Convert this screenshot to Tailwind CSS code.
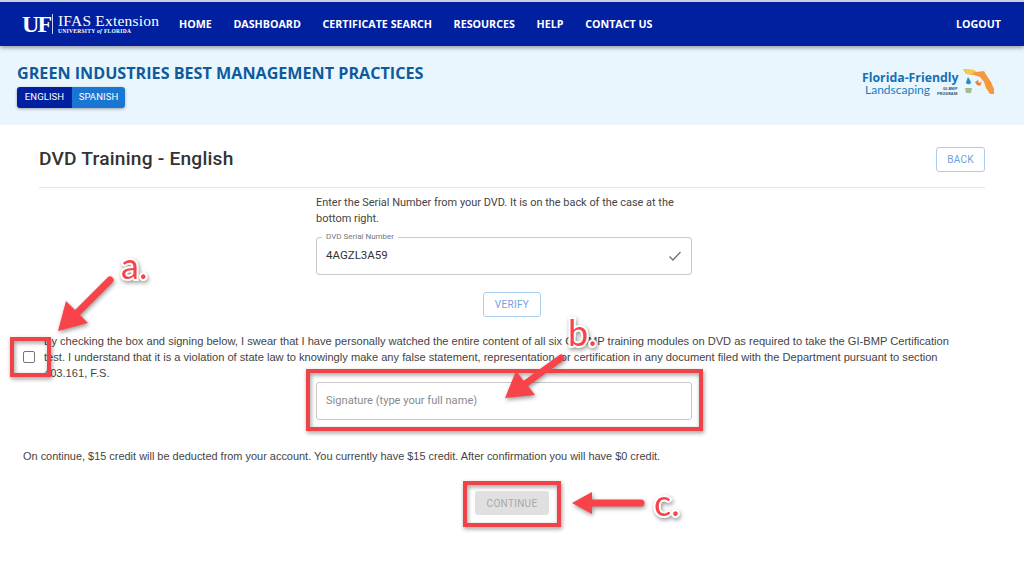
<!DOCTYPE html>
<html lang="en">
<head>
    <meta charset="UTF-8">
    <meta name="viewport" content="width=device-width, initial-scale=1.0">
    <title>DVD Training - English</title>
    <script src="https://cdn.jsdelivr.net/npm/@tailwindcss/browser@4"></script>
</head>
<body class="bg-white font-['Roboto',sans-serif] text-[#3a3a3a]">
<div class="relative w-[1024px] h-[568px] overflow-hidden">

    <!-- Nav -->
    <header class="h-[46px] bg-[#00209f] border-t-2 border-[#c9cede] shadow-[0_2px_4px_rgba(0,0,0,0.35)] flex items-center pl-[22px] pr-[23px] relative z-10">
        <div class="flex items-center w-[157px] text-white">
            <span class="font-['Liberation_Serif',serif] font-bold text-[24px] leading-none tracking-[-1.8px] w-[30px] whitespace-nowrap">UF</span>
            <span class="w-px h-[20px] bg-white/80 mr-[5px]"></span>
            <div class="flex flex-col font-['Liberation_Serif',serif]">
                <span class="text-[15.5px] leading-[15px] tracking-[0.2px] whitespace-nowrap">IFAS Extension</span>
                <span class="text-[5.5px] leading-[7px] font-bold tracking-[0.3px] whitespace-nowrap">UNIVERSITY <i>of</i> FLORIDA</span>
            </div>
        </div>
        <nav class="flex gap-[21.7px] text-white text-[10.7px] font-bold font-['Open_Sans',sans-serif] whitespace-nowrap">
            <a>HOME</a><a>DASHBOARD</a><a>CERTIFICATE SEARCH</a><a>RESOURCES</a><a>HELP</a><a>CONTACT US</a>
        </nav>
        <a class="ml-auto text-white text-[10.7px] font-bold font-['Open_Sans',sans-serif]">LOGOUT</a>
    </header>

    <!-- Hero -->
    <section class="h-[79px] bg-[#e9f6fe] flex justify-between pl-[17px] pr-[29px]">
        <div class="pt-[17px]">
            <h1 class="text-[#0e5a9c] text-[16.15px] leading-[20px] font-bold font-['Open_Sans',sans-serif] whitespace-nowrap">GREEN INDUSTRIES BEST MANAGEMENT PRACTICES</h1>
            <div class="flex w-[108px] h-[21px] mt-[4px] rounded-[3px] overflow-hidden shadow-[0_1px_3px_rgba(0,0,0,0.35)] text-white text-[9.5px] tracking-[0.1px]">
                <span class="w-[55px] bg-[#00209f] flex items-center justify-center">ENGLISH</span>
                <span class="flex-1 bg-[#1976d2] flex items-center justify-center">SPANISH</span>
            </div>
        </div>
        <div class="flex items-start pt-[25px]">
            <div class="flex flex-col w-[100px] font-['Open_Sans',sans-serif] text-[#1a7cbf] mr-[1px]">
                <span class="text-[12.3px] leading-[14px] font-bold text-[#1670b5] whitespace-nowrap">Florida-Friendly</span>
                <div class="flex items-end -mt-[2px]">
                    <span class="text-[12px] leading-[14px] ml-[3px] whitespace-nowrap font-['Lato',sans-serif] w-[67px]">Landscaping</span>
                    <span class="text-[4px] leading-[5px] font-bold text-[#33576f] whitespace-nowrap ml-[5px] mb-[1px] text-right">GI-BMP<br>PROGRAM</span>
                </div>
            </div>
            <svg width="32" height="26" viewBox="0 0 32 26" class="-mt-[2px]">
                <path d="M0 0 L11 1 L13 3 L21 2 L24 7 L28 13 L31 20 L31 25 L27 25 L23 19 L21 13 L17 8 L11 6 L3 5 Z" fill="#f5993a"/>
                <path d="M0 0 L11 1 L12 3 L9 5 L3 5 Z" fill="#f7c948"/>
                <path d="M5 8 C7 11 8 12 8 14 A3 3 0 0 1 3 14 C3 12 4 11 5 8Z" fill="#2b8ccb"/>
                <path d="M12 13 L15 11 L16 14 L19 13 L17 17 L14 16 Z" fill="#ee7f35"/>
                <path d="M2 19 L9 19 L8 24 L3 24 Z" fill="#a2bd96"/>
            </svg>
        </div>
    </section>

    <!-- Main -->
    <main class="px-[39px]">
        <div class="h-[63px] flex items-center justify-between border-b border-[#e4e4e4]">
            <h2 class="text-[19.2px] font-medium text-[#333] tracking-[0.2px] mt-[7px]">DVD Training - English</h2>
            <button class="w-[49px] h-[25px] mt-[6px] border border-[#a9cdf0] rounded-[3px] text-[#6ea2dc] text-[10px] tracking-[0.3px]">BACK</button>
        </div>
    </main>

    <div class="w-[376px] ml-[316px] mt-[7px] text-[10.95px] leading-[16px] text-[#444]">
        Enter the Serial Number from your DVD. It is on the back of the case at the bottom right.
    </div>
    <div class="relative w-[376px] h-[38px] ml-[316px] mt-[10px] border border-[#c8c8c8] rounded-[3px] flex items-center px-[9px] text-[11.5px] text-[#333]">
        <span class="absolute -top-[6px] left-[5px] bg-white px-[4px] text-[8px] leading-[10px] text-[#777]">DVD Serial Number</span>
        4AGZL3A59
        <svg class="ml-auto" width="14" height="14" viewBox="0 0 14 14" fill="none" stroke="#6f6f6f" stroke-width="1.3"><path d="M1.5 7.5 L5 11 L12.5 3"/></svg>
    </div>
    <div class="flex justify-center mt-[17px]">
        <button class="w-[58px] h-[25px] border border-[#a9cdf0] rounded-[3px] text-[#6ea2dc] text-[10px] tracking-[0.3px]">VERIFY</button>
    </div>

    <div class="flex items-center mt-[16px] pl-[23px]">
        <span class="w-[12px] h-[12px] shrink-0 border-[1.5px] border-[#757575] rounded-[2px] bg-white mr-[9px]"></span>
        <p class="font-['Liberation_Sans',sans-serif] text-[11.12px] leading-[16px] text-[#444] w-[915px]">By checking the box and signing below, I swear that I have personally watched the entire content of all six GI-BMP training modules on DVD as required to take the GI-BMP Certification test. I understand that it is a violation of state law to knowingly make any false statement, representation, or certification in any document filed with the Department pursuant to section 403.161, F.S.</p>
    </div>

    <div class="w-[376px] h-[38px] ml-[316px] mt-[1px] border border-[#c8c8c8] rounded-[3px] flex items-center px-[9px] text-[11.1px] text-[#8a8a8a]">Signature (type your full name)</div>

    <p class="font-['Liberation_Sans',sans-serif] text-[10.95px] leading-[14px] text-[#444] ml-[23px] mt-[29px] whitespace-nowrap">On continue, $15 credit will be deducted from your account. You currently have $15 credit. After confirmation you will have $0 credit.</p>

    <div class="flex justify-center mt-[28px]">
        <button disabled class="w-[74px] h-[24px] bg-[#e0e0e0] rounded-[3px] text-[#a8a8a8] text-[10px] tracking-[0.3px]">CONTINUE</button>
    </div>

    <!-- Annotations laid over the screenshot -->
    <svg class="absolute inset-0 z-20 pointer-events-none" width="1024" height="568" viewBox="0 0 1024 568" fill="none">
        <g class="drop-shadow-[1px_2px_2px_rgba(0,0,0,0.4)]">
            <rect x="12" y="339" width="37" height="36" stroke="#f04349" stroke-width="4"/>
            <rect x="308" y="371" width="393" height="58" stroke="#f04349" stroke-width="4"/>
            <rect x="465" y="483" width="94" height="42" stroke="#f04349" stroke-width="4"/>

            <path d="M110 280 L75 315" stroke="#f8434a" stroke-width="7" stroke-linecap="round"/>
            <path d="M58 331 L66 301 L88 323 Z" fill="#f8434a"/>
            <path d="M561 358 L525 384" stroke="#f8434a" stroke-width="7" stroke-linecap="round"/>
            <path d="M505 398 L516 371 L535 395 Z" fill="#f8434a"/>
            <path d="M641 503 L590 503" stroke="#f8434a" stroke-width="7" stroke-linecap="round"/>
            <path d="M572 503 L592 492 L592 514 Z" fill="#f8434a"/>

            <text x="121" y="279" font-family="Lato, sans-serif" font-size="36" fill="#f8434a" stroke="#fff" stroke-width="4" paint-order="stroke">a.</text>
            <text x="568" y="346" font-family="Lato, sans-serif" font-size="36" fill="#f8434a" stroke="#fff" stroke-width="4" paint-order="stroke">b.</text>
            <text x="654" y="516" font-family="Lato, sans-serif" font-size="36" fill="#f8434a" stroke="#fff" stroke-width="4" paint-order="stroke">c.</text>
        </g>
    </svg>
</div>
</body>
</html>
